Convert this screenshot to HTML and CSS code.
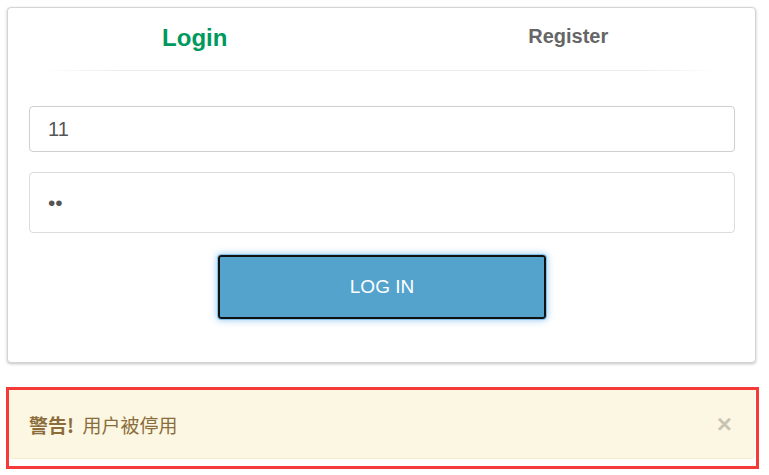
FILE: index.html
```html
<!DOCTYPE html>
<html lang="zh">
<head>
<meta charset="utf-8">
<title>Login</title>
<link rel="stylesheet" href="styles.css">
</head>
<body>
<div class="card">
  <div class="tabs">
    <div class="tab tab-active">Login</div>
    <div class="tab">Register</div>
  </div>
  <div class="divider"></div>
  <form class="form">
    <input class="field field-user" type="text" value="11">
    <input class="field field-pass" type="password" value="11">
    <div class="actions">
      <button class="btn" type="button">LOG IN</button>
    </div>
  </form>
</div>
<div class="highlight">
  <div class="alert">
    <span class="alert-text"><strong>警告!</strong>&nbsp;&nbsp;用户被停用</span>
    <span class="close">×</span>
  </div>
</div>
</body>
</html>
```

FILE: styles.css
```css
html, body {
  margin: 0;
  padding: 0;
  background: #fff;
}
body {
  font-family: "Liberation Sans", Arial, "Noto Sans CJK SC", sans-serif;
  padding: 7px 0 0 7px;
}
.card {
  width: 747px;
  height: 354px;
  border: 1px solid #d4d4d4;
  border-radius: 4px;
  box-shadow: 0 1px 3px rgba(0,0,0,0.25);
  background: #fff;
  box-sizing: content-box;
}
.tabs {
  display: flex;
  padding-top: 18px;
  height: 44px;
  box-sizing: border-box;
}
.tab {
  flex: 1;
  text-align: center;
  font-weight: bold;
  font-size: 20px;
  line-height: 1;
  color: #666;
}
.tab-active {
  font-size: 24px;
  color: #00995c;
}
.divider {
  height: 1px;
  margin: 18px 35px 0 32px;
  background: linear-gradient(to right, rgba(232,232,232,0), #ebebeb 12%, #ebebeb 88%, rgba(232,232,232,0));
}
.form {
  display: flex;
  flex-direction: column;
  padding: 35px 20px 0 21px;
  gap: 20px;
}
.field {
  display: block;
  width: 706px;
  box-sizing: border-box;
  border: 1px solid #cfcfcf;
  border-radius: 4px;
  padding: 0 18px;
  font-family: "Liberation Sans", Arial, sans-serif;
  font-size: 20px;
  color: #555;
  background: #fff;
  outline: none;
  margin: 0;
}
.field-user {
  height: 46px;
}
.field-pass {
  height: 61px;
  border-color: #dcdcdc;
  font-size: 21px;
}
.actions {
  display: flex;
  justify-content: center;
  margin-top: 1px;
}
.btn {
  width: 330px;
  height: 66px;
  margin: 0;
  border: 1px solid #86c2ea;
  border-radius: 4px;
  background: #54a3cd;
  box-shadow: inset 0 0 0 2px #111, 0 0 7px rgba(102,175,233,0.7);
  color: #fff;
  font-family: "Liberation Sans", Arial, sans-serif;
  font-size: 19px;
  padding: 0;
  cursor: pointer;
}
.highlight {
  margin-top: 24px;
  margin-left: -1px;
  width: 747px;
  border: 3px solid #f53a3a;
  padding-bottom: 7px;
  background: #fff;
}
.alert {
  display: flex;
  align-items: center;
  justify-content: space-between;
  height: 69px;
  box-sizing: border-box;
  padding: 0 23px 0 20px;
  margin-right: 1px;
  background: #fcf7e3;
  border-bottom: 1px solid #f4ebcc;
  border-radius: 0 0 4px 4px;
  color: #8a6d3b;
  font-family: "Liberation Sans", Arial, "Noto Sans CJK SC", sans-serif;
  font-size: 19px;
}
.alert-text {
  font-family: "Noto Sans CJK SC", sans-serif;
  font-size: 19px;
}
.alert-text strong {
  font-weight: bold;
}
.close {
  font-family: "Liberation Sans", Arial, sans-serif;
  font-size: 26px;
  font-weight: bold;
  color: #000;
  opacity: 0.2;
  line-height: 1;
}
```
